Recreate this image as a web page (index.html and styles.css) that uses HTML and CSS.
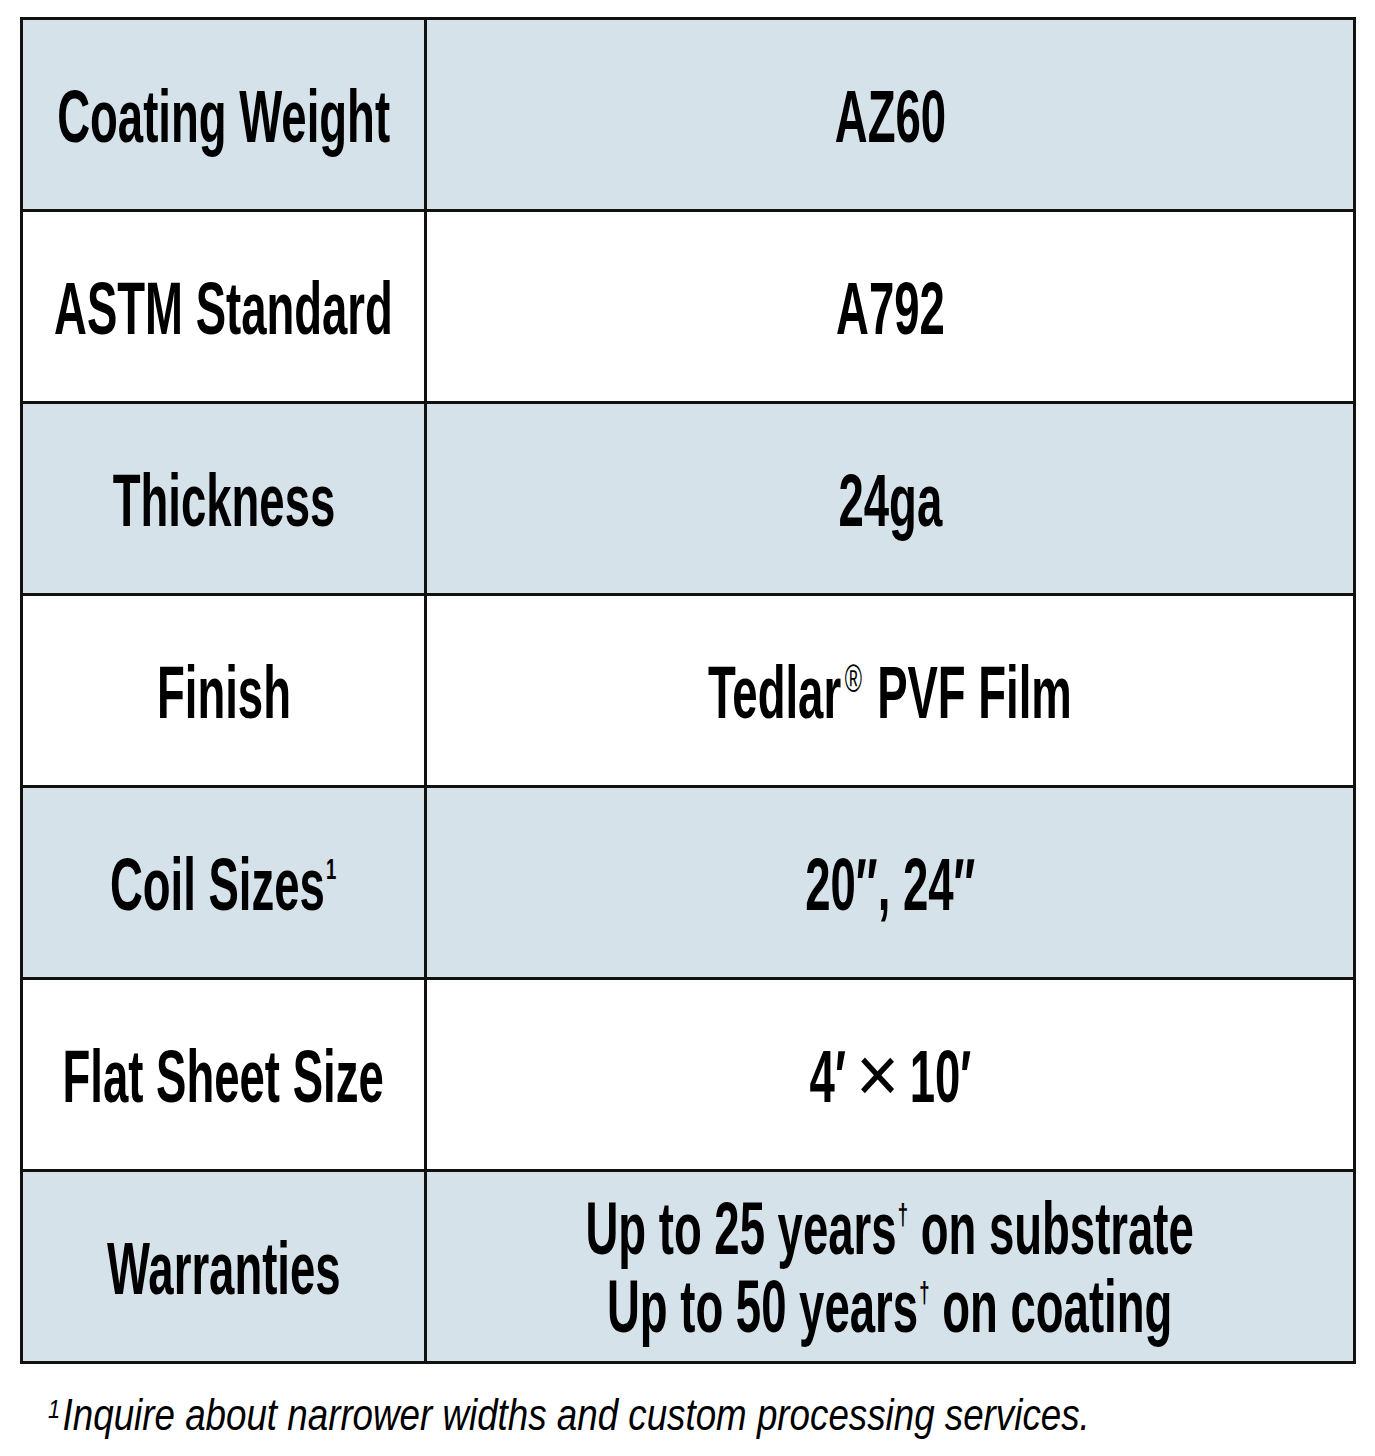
FILE: index.html
```html
<!DOCTYPE html>
<html lang="en">
	<head>
		<meta charset="UTF-8">
		<meta name="viewport" content="width=device-width, initial-scale=1.0">
		<title>Specifications</title>
		<link rel="stylesheet" href="styles.css">
	</head>
	<body>
		<table class="spec-table">
			<colgroup>
				<col class="label-col">
				<col>
			</colgroup>
			<tr class="shaded">
				<th><div class="cell"><span class="squeeze">Coating Weight</span></div></th>
				<td><div class="cell"><span class="squeeze">AZ60</span></div></td>
			</tr>
			<tr>
				<th><div class="cell"><span class="squeeze">ASTM Standard</span></div></th>
				<td><div class="cell"><span class="squeeze">A792</span></div></td>
			</tr>
			<tr class="shaded">
				<th><div class="cell"><span class="squeeze">Thickness</span></div></th>
				<td><div class="cell"><span class="squeeze">24ga</span></div></td>
			</tr>
			<tr>
				<th><div class="cell"><span class="squeeze">Finish</span></div></th>
				<td><div class="cell"><span class="squeeze">Tedlar<sup class="reg">®</sup> PVF Film</span></div></td>
			</tr>
			<tr class="shaded">
				<th><div class="cell"><span class="squeeze">Coil Sizes<sup class="note">1</sup></span></div></th>
				<td><div class="cell"><span class="squeeze">20&Prime;, 24&Prime;</span></div></td>
			</tr>
			<tr>
				<th><div class="cell"><span class="squeeze">Flat Sheet Size</span></div></th>
				<td><div class="cell"><span class="squeeze">4&prime; <span class="times">&times;</span> 10&prime;</span></div></td>
			</tr>
			<tr class="shaded">
				<th><div class="cell"><span class="squeeze">Warranties</span></div></th>
				<td><div class="cell two-line"><span class="squeeze">Up to 25 years<sup class="note">&dagger;</sup> on substrate<br>Up to 50 years<sup class="note">&dagger;</sup> on coating</span></div></td>
			</tr>
		</table>
		<p class="footnote"><sup>1</sup>Inquire about narrower widths and custom processing services.</p>
	</body>
</html>
```

FILE: styles.css
```css
body {
	font-family: "Liberation Sans Narrow", "Liberation Sans", Arial, sans-serif;
	background-color: #fff;
	color: #000;
	margin: 0;
	padding: 17px 19px 0 20px;
}
.spec-table {
	width: 1336px;
	table-layout: fixed;
	border-collapse: collapse;
	border: 3px solid #111;
}
.label-col {
	width: 404px;
}
.spec-table th,
.spec-table td {
	border: 3px solid #111;
	padding: 0;
	overflow: visible;
}
.cell {
	height: 189px;
	padding-top: 4px;
	box-sizing: border-box;
	display: flex;
	align-items: center;
	justify-content: center;
	text-align: center;
	font-size: 74px;
	font-weight: bold;
	line-height: 1;
}
.shaded {
	background-color: #d6e2ea;
}
.squeeze {
	display: block;
	flex: none;
	transform: scaleX(0.615);
	white-space: nowrap;
}
.two-line {
	line-height: 78px;
	padding-top: 2px;
}
.note {
	font-size: 30px;
	vertical-align: top;
	line-height: 1;
	position: relative;
	top: 6px;
	margin-left: 2px;
}
.two-line .note {
	top: 10px;
}
.reg {
	font-size: 38px;
	font-weight: normal;
	vertical-align: top;
	line-height: 1;
	position: relative;
	top: 4px;
	margin: 0 4px 0 6px;
}
.times {
	display: inline-block;
	font-size: 80px;
	font-weight: normal;
	line-height: 0;
	transform: scaleX(1.5);
	margin: 0 8px;
}
.footnote {
	margin: 26px 0 0 28px;
	font-size: 44px;
	font-style: italic;
	transform: scaleX(0.835);
	transform-origin: left;
	white-space: nowrap;
}
.footnote sup {
	font-size: 26px;
	vertical-align: top;
	position: relative;
	top: 4px;
	margin-right: 3px;
}
```
